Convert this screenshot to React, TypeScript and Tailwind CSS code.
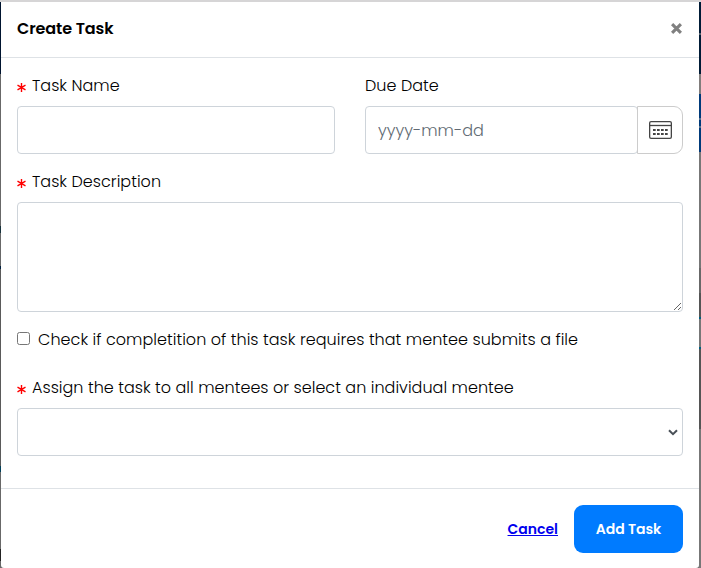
import type { ReactNode } from 'react';

function Star() {
  return (
    <svg className="mt-[9px] mr-[6px] h-[9px] w-[9px] shrink-0" viewBox="0 0 9 9" fill="none" stroke="#ff0000" strokeWidth="1.4">
      <path d="M4.5 0V9M0.5 2.2L8.5 6.8M8.5 2.2L0.5 6.8" />
    </svg>
  );
}

function Label({ required, children }: { required?: boolean; children?: ReactNode }) {
  return (
    <div className="flex h-6 items-start">
      {required && <Star />}
      <span className="text-base leading-6 font-light tracking-[0.03px] whitespace-nowrap">{children}</span>
    </div>
  );
}

const field = 'block w-full rounded border border-[#ced4da] bg-white outline-none';

export default function App() {
  return (
    <div className="h-[568px] w-[701px] overflow-hidden border-t-2 border-[#d6d5d6] bg-[#666] font-['Poppins','Inter',sans-serif] text-black">
      <div className="flex h-[566px]">
        <div className="flex w-px shrink-0 flex-col bg-[#686868]">
          <div className="h-[72px] bg-[#00142f]" />
          <div className="mt-[152px] h-[7px] bg-[#16323c]" />
          <div className="mt-[33px] h-[3px] bg-[#00203f]" />
          <div className="h-[197px] bg-[#5a5a5a]" />
          <div className="h-[6px] bg-[#00405a]" />
          <div className="mt-[77px] h-[12px] bg-[#222]" />
        </div>
        <div className="flex w-[698px] shrink-0 flex-col rounded-br-[3px] rounded-bl-[3px] bg-white">
          <header className="flex h-14 items-center justify-between border-b border-[#dee2e6] px-4 pb-[2px]">
            <h1 className="text-base leading-6 font-semibold tracking-[-0.1px]">Create Task</h1>
            <button aria-label="Close" className="mr-[1px]">
              <svg className="h-[11px] w-[11px]" viewBox="0 0 11 11" fill="none" stroke="#808080" strokeWidth="3.1">
                <path d="M1.1 1.1L9.9 9.9M9.9 1.1L1.1 9.9" />
              </svg>
            </button>
          </header>
          <main className="flex h-[430px] flex-col px-4 pt-4">
            <div className="grid grid-cols-2 gap-[30px]">
              <div>
                <Label required>Task Name</Label>
                <input className={`${field} mt-2 h-12 px-3`} />
              </div>
              <div>
                <Label>Due Date</Label>
                <div className="mt-2 flex h-12">
                  <input
                    placeholder="yyyy-mm-dd"
                    className="w-[273px] rounded border border-[#ced4da] px-3 pt-[2px] text-base font-light outline-none placeholder:text-[#616a72]"
                  />
                  <button aria-label="Choose date" className="-ml-px flex w-[46px] items-center justify-center rounded-r-[9px] border border-[#cccccc]">
                    <svg className="h-[18px] w-[23px]" viewBox="0 0 23 18" fill="none" stroke="#444" strokeWidth="1.3">
                      <rect x="0.65" y="0.65" width="21.7" height="16.7" rx="1.4" />
                      <path d="M1 4.5H22" />
                      <path d="M4 9H19M4 13H19" strokeWidth="2.2" strokeDasharray="2.7 1.3" />
                    </svg>
                  </button>
                </div>
              </div>
            </div>
            <div className="mt-4">
              <Label required>Task Description</Label>
              <textarea className={`${field} mt-2 h-[110px] resize`} />
            </div>
            <label className="mt-4 flex h-6 items-center">
              <input type="checkbox" className="mr-2 mb-[3px] h-[13px] w-[13px]" />
              <span className="text-base leading-6 font-light tracking-[0.04px] whitespace-nowrap">
                Check if completition of this task requires that mentee submits a file
              </span>
            </label>
            <div className="mt-6">
              <Label required>Assign the task to all mentees or select an individual mentee</Label>
              <div className={`${field} mt-2 flex h-12 items-center justify-end pr-[4px]`}>
                <svg className="h-[7px] w-[10px]" viewBox="0 0 10 7" fill="none" stroke="#495057" strokeWidth="2">
                  <path d="M1 1.2L5 5.2L9 1.2" />
                </svg>
              </div>
            </div>
          </main>
          <footer className="flex h-20 items-center justify-end border-t border-[#dee2e6] px-4">
            <a href="#" className="mr-[16px] pt-[2px] text-[14px] font-semibold text-[#0000ee] underline">Cancel</a>
            <button className="h-12 w-[109px] rounded-[9px] bg-[#007bff] pt-[2px] text-[14px] font-semibold tracking-[-0.05px] text-white">Add Task</button>
          </footer>
        </div>
        <div className="flex w-[2px] shrink-0 flex-col bg-[#777]">
          <div className="h-[31px] bg-[#001b36]" />
          <div className="h-[2px] bg-[#53606b]" />
          <div className="h-[39px] bg-[#001b36]" />
          <div className="h-[20px] bg-[#817d7c]" />
          <div className="h-[24px] bg-[#003a7a]" />
          <div className="h-[2px] bg-[#53718f]" />
          <div className="h-[6px] bg-[#003a7a]" />
          <div className="h-[2px] bg-[#53718f]" />
          <div className="h-[24px] bg-[#003a7a]" />
          <div className="mt-[116px] h-[25px] bg-[#686868]" />
          <div className="h-[24px] bg-[#555]" />
          <div className="h-[2px] bg-[#006080]" />
          <div className="mt-[28px] h-[2px] bg-[#006080]" />
          <div className="h-[80px] bg-[#555]" />
        </div>
      </div>
    </div>
  );
}
